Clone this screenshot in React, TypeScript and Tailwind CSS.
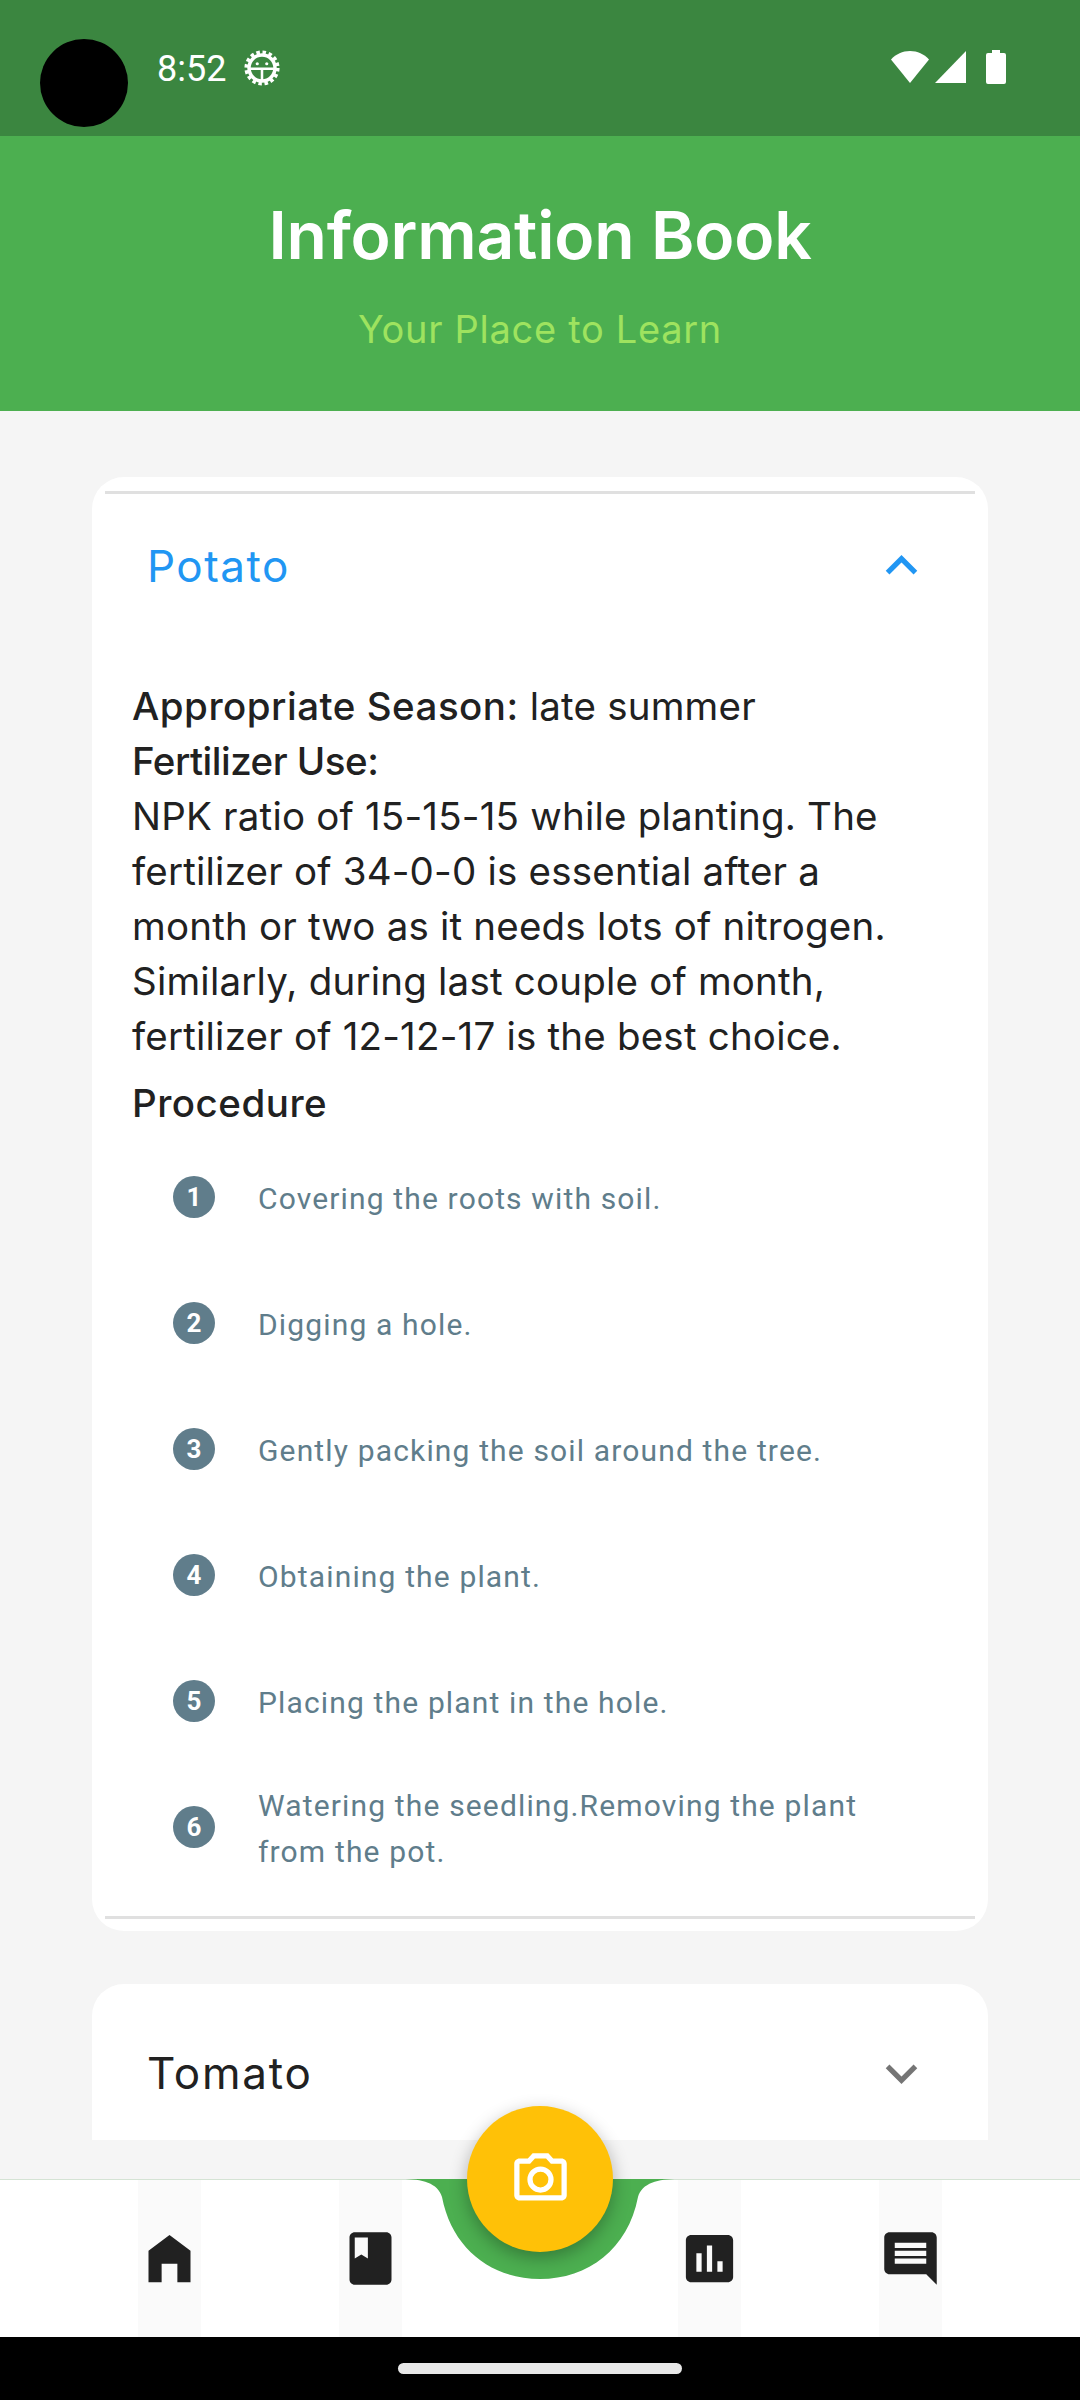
const poppins = "font-['Inter','Liberation_Sans',sans-serif]";

const steps = [
  "Covering the roots with soil.",
  "Digging a hole.",
  "Gently packing the soil around the tree.",
  "Obtaining the plant.",
  "Placing the plant in the hole.",
  "Watering the seedling.Removing the plant from the pot.",
];

function NavIcon({ d }: { d: string }) {
  return (
    <div className="w-[63px] h-full bg-[#fafafa] flex items-center justify-center">
      <svg viewBox="0 0 24 24" className="w-[63px] h-[63px] shrink-0 fill-[#212121]">
        <path d={d} />
      </svg>
    </div>
  );
}

function StatusBar() {
  return (
    <div className="h-[136px] bg-[#3b8640] flex items-start pt-[48px] pl-[157px] pr-[74px] relative">
      {/* camera hole */}
      <div className="absolute left-[40px] top-[39px] w-[88px] h-[88px] rounded-full bg-black" />
      <span className="font-['Roboto',sans-serif] text-[36px] leading-[42px] text-white">8:52</span>
      <svg viewBox="0 0 24 24" className="ml-[17px] mt-[1px] w-[38px] h-[38px] fill-none stroke-white">
        <circle cx="12" cy="12" r="8.2" strokeWidth="2.2" />
        <circle cx="12" cy="12" r="10" strokeWidth="2.2" strokeDasharray="2.2 1.73" />
        <path d="M4.5 12.5h15M12 12.5v7" strokeWidth="1.6" />
        <circle cx="9" cy="9.300" r="1" fill="#fff" stroke="none" />
        <circle cx="15" cy="9.300" r="1" fill="#fff" stroke="none" />
      </svg>
      <div className="ml-auto flex items-center gap-[4px] mt-[2px]">
        <svg viewBox="0 0 40 34" className="w-[40px] h-[34px] fill-white">
          <path d="M20 33 1 9.5C6 4 12.500 1 20 1s14 3 19 8.500z" />
        </svg>
        <svg viewBox="0 0 33 34" className="w-[33px] h-[34px] fill-white">
          <path d="M32 1v32H1z" />
        </svg>
        <svg viewBox="0 0 20 34" className="ml-[15px] w-[20px] h-[34px] fill-white">
          <path d="M6 0h8v3h4a2 2 0 0 1 2 2v27a2 2 0 0 1-2 2H2a2 2 0 0 1-2-2V5a2 2 0 0 1 2-2h4z" />
        </svg>
      </div>
    </div>
  );
}

function Chevron({ up }: { up?: boolean }) {
  return (
    <svg viewBox="0 0 24 24" className={`w-[63px] h-[63px] ${up ? "fill-[#2196f3]" : "fill-[#757575]"}`}>
      <path d={up ? "M12 8l-6 6 1.410 1.410L12 10.830l4.590 4.580L18 14z" : "M16.590 8.590 12 13.170 7.410 8.590 6 10l6 6 6-6z"} />
    </svg>
  );
}

export default function App() {
  return (
    <div className="w-[1080px] h-[2400px] bg-[#f5f5f5] flex flex-col overflow-hidden relative">
      <StatusBar />

      <header className={`h-[275px] bg-[#4caf50] flex flex-col items-center ${poppins}`}>
        <h1 className="mt-[58px] text-[66px] leading-[82px] font-semibold text-white tracking-[-0.2px]">Information Book</h1>
        <p className="mt-[28px] text-[38px] leading-[50px] tracking-[0.7px] text-[#9ee35f]">Your Place to Learn</p>
      </header>

      <main className={`flex-1 min-h-0 px-[92px] pt-[66px] flex flex-col gap-[53px] overflow-hidden ${poppins}`}>
        <section className="bg-white rounded-[32px] px-[13px] pt-[14px] pb-[12px] shrink-0">
          <div className="h-[3px] bg-[#e0e0e0]" />
          <div className="h-[143px] flex items-center justify-between pl-[42px] pr-[42px]">
            <span className="text-[44px] tracking-[1.5px] text-[#2196f3]">Potato</span>
            <Chevron up />
          </div>
          <div className="pt-[42px] px-[27px] text-[38.5px] leading-[55px] tracking-[0.2px] text-[#212121]">
            <p>
              <b className="font-medium tracking-[0.5px]">Appropriate Season:</b> late summer
            </p>
            <p className="font-medium tracking-[-0.5px]">Fertilizer Use:</p>
            <p>
              NPK ratio of 15-15-15 while planting. The
              <br />
              fertilizer of 34-0-0 is essential after a
              <br />
              month or two as it needs lots of nitrogen.
              <br />
              Similarly, during last couple of month,
              <br />
              fertilizer of 12-12-17 is the best choice.
            </p>
            <p className="mt-[12px] font-medium tracking-[0.5px]">Procedure</p>
          </div>
          <ol className="mt-[5px] mb-[24px] pl-[68px] pr-[80px] font-['Roboto',sans-serif]">
            {steps.map((s, i) => (
              <li key={s} className="h-[126px] flex items-center gap-[43px]">
                <span className="w-[42px] h-[42px] mb-[4px] shrink-0 rounded-full bg-[#607d8b] text-white text-[26px] font-bold flex items-center justify-center">
                  {i + 1}
                </span>
                <span className="text-[30px] leading-[46px] tracking-[1.15px] text-[#607d8b]">{s}</span>
              </li>
            ))}
          </ol>
          <div className="h-[3px] bg-[#e0e0e0]" />
        </section>

        <section className="bg-white rounded-t-[32px] h-[156px] shrink-0 overflow-hidden px-[13px]">
          <div className="h-[178px] flex items-center justify-between pl-[42px] pr-[42px]">
            <span className="text-[44px] tracking-[1.8px] text-[#212121]">Tomato</span>
            <Chevron />
          </div>
        </section>
      </main>

      <nav className="h-[158px] shrink-0 bg-white border-t border-[#d5e3d5] flex pl-[138px] pr-[138px] relative">
        <NavIcon d="M12 3 4 9v12h5v-7h6v7h5V9z" />
        <div className="w-[138px]" />
        <NavIcon d="M18 2H6c-1.100 0-2 .9-2 2v16c0 1.100.9 2 2 2h12c1.100 0 2-.9 2-2V4c0-1.100-.9-2-2-2zM6 4h5v8l-2.500-1.500L6 12V4z" />
        <div className="w-[276px] relative">
          <svg viewBox="0 0 276 100" className="absolute left-0 top-[-1px] w-[276px] h-[100px] fill-[#4caf50]">
            <path d="M0 0C20 0 36 4 40 18 50 70 90 100 138 100S226 70 236 18C240 4 256 0 276 0z" />
          </svg>
          {/* camera button sits over the notch */}
          <button className="absolute left-[65px] top-[-74px] w-[146px] h-[146px] rounded-full bg-[#ffc107] shadow-[0_6px_18px_rgba(0,0,0,0.3)] flex items-center justify-center">
            <svg viewBox="0 0 24 24" className="w-[63px] h-[63px] fill-white">
              <path d="M20 4h-3.170L15 2H9L7.170 4H4c-1.100 0-2 .9-2 2v12c0 1.100.9 2 2 2h16c1.100 0 2-.9 2-2V6c0-1.100-.9-2-2-2zm0 14H4V6h4.050l1.830-2h4.240l1.830 2H20v12zM12 7a5 5 0 1 0 0 10 5 5 0 0 0 0-10zm0 8a3 3 0 1 1 0-6 3 3 0 0 1 0 6z" />
            </svg>
          </button>
        </div>
        <NavIcon d="M19 3H5c-1.100 0-2 .9-2 2v14c0 1.100.9 2 2 2h14c1.100 0 2-.9 2-2V5c0-1.100-.9-2-2-2zM9 17H7v-7h2v7zm4 0h-2V7h2v10zm4 0h-2v-4h2v4z" />
        <div className="w-[138px]" />
        <NavIcon d="M21.990 4c0-1.100-.89-2-1.990-2H4c-1.100 0-2 .9-2 2v12c0 1.100.9 2 2 2h14l4 4-.01-18zM18 14H6v-2h12v2zm0-3H6V9h12v2zm0-3H6V6h12v2z" />
      </nav>

      <div className="h-[63px] shrink-0 bg-black flex justify-center pt-[26px]">
        <div className="w-[284px] h-[11px] rounded-full bg-[#e8e8e8]" />
      </div>
    </div>
  );
}
